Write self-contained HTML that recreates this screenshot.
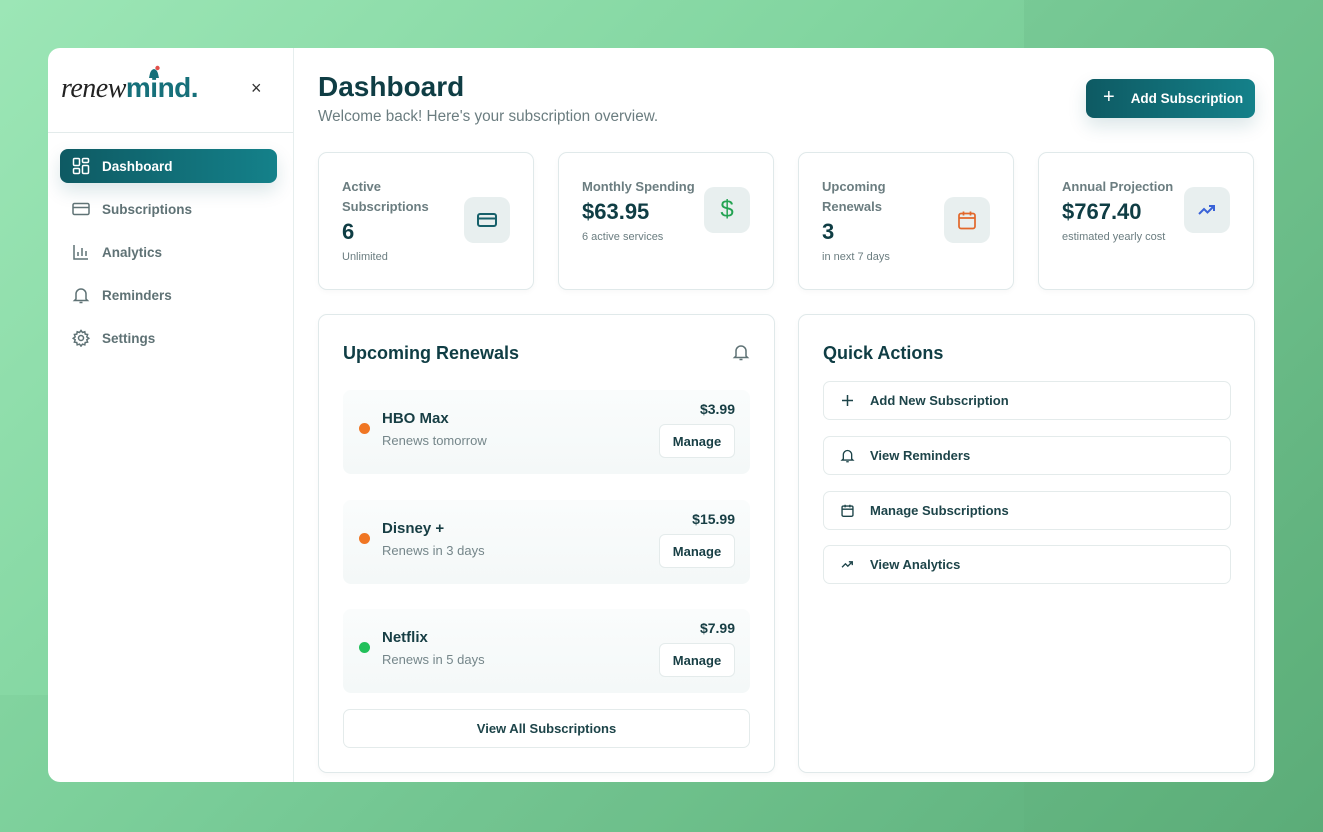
<!DOCTYPE html>
<html><head><meta charset="utf-8"><style>
*{box-sizing:border-box;margin:0;padding:0}
body{width:1323px;height:832px;overflow:hidden;font-family:"Liberation Sans",sans-serif;background:linear-gradient(135deg,#9ce6b6 0%,#82d5a0 40%,#5fb17c 100%);position:relative}
.ov1{position:absolute;left:1024px;top:0;width:299px;height:832px;background:rgba(40,110,70,0.07)}
.ov2{position:absolute;left:0;top:695px;width:1024px;height:137px;background:rgba(40,110,70,0.05)}
.app{position:absolute;left:48px;top:48px;width:1226px;height:734px;background:#fff;border-radius:12px;overflow:hidden}
.side{position:absolute;left:0;top:0;width:246px;height:734px;border-right:1px solid #e6eeee}
.logo{position:absolute;left:0;top:0;width:245px;height:85px;border-bottom:1px solid #e3ebeb}
.nav{position:absolute;left:12px;width:217px;height:34px;border-radius:8px;display:flex;align-items:center;padding-left:12px;font-size:13.5px;color:#5f7275;font-weight:bold}
.nav svg{margin-right:12px}
.nav.act{background:linear-gradient(90deg,#0e5a63,#14818a);color:#fff;box-shadow:0 8px 18px rgba(14,90,99,0.15)}
.abs{position:absolute}
.card{position:absolute;border:1px solid #e0e9ea;border-radius:9px;background:#fff;box-shadow:0 2px 6px rgba(0,0,0,0.03)}
.stat{top:104px;height:138px;width:216px;padding:24px 23px 0}
.row{display:flex;align-items:center}
.stat .t{font-size:13px;color:#6b7d80;font-weight:bold;line-height:20px}
.stat .v{font-size:22px;color:#0f3d44;font-weight:bold;line-height:30px}
.stat .s{font-size:11px;color:#6b7d80;margin-top:4px}
.ib{width:46px;height:46px;border-radius:10px;background:#e8efef;display:flex;align-items:center;justify-content:center;flex-shrink:0}
.h{font-size:18px;color:#0f3d44;font-weight:bold}
.ren{position:absolute;left:24px;width:407px;height:84px;border-radius:8px;background:linear-gradient(180deg,#fafcfc,#f4f8f8)}
.dot{position:absolute;left:16px;top:33px;width:11px;height:11px;border-radius:50%}
.nm{position:absolute;left:39px;top:20px;font-size:15px;color:#173e44;font-weight:bold}
.sb{position:absolute;left:39px;top:43px;font-size:13px;color:#75868a}
.pr{position:absolute;right:15px;top:11px;font-size:14px;color:#173e44;font-weight:bold}
.mg{position:absolute;right:15px;top:34px;width:76px;height:34px;border:1px solid #e4ebeb;border-radius:6px;background:#fff;font-size:13px;color:#173e44;font-weight:bold;display:flex;align-items:center;justify-content:center}
.qa{position:absolute;left:24px;width:408px;height:39px;border:1px solid #e4ebeb;border-radius:7px;display:flex;align-items:center;padding-left:16px;font-size:13px;color:#1d4449;font-weight:bold}
.qa svg{margin-right:15px}
</style></head><body>
<div class="ov1"></div><div class="ov2"></div>
<div class="app">
 <div class="side">
  <div class="logo">
   <div class="abs" style="left:13px;top:24px;font-family:'Liberation Serif',serif;font-style:italic;font-size:28px;color:#222;letter-spacing:-0.5px">renew<span style="font-family:'Liberation Sans',sans-serif;font-style:normal;font-weight:bold;color:#16707a;letter-spacing:-0.5px">mind.</span></div>
   <svg class="abs" style="left:98px;top:17px" width="16" height="16" viewBox="0 0 16 16"><path d="M3 13 C4 9 4 5 8 4 C12 5 12 9 13 13Z" fill="#16707a"/><circle cx="11.5" cy="3" r="2.2" fill="#e2504a"/></svg>
   <div class="abs" style="left:203px;top:30px;font-size:18px;color:#333">×</div>
  </div>
  <div class="nav act" style="top:101px"><svg width="18" height="18" viewBox="0 0 18 18" fill="none" stroke="#fff" stroke-width="1.5"><rect x="1.5" y="1.5" width="6" height="7" rx="1.2"/><rect x="10.5" y="1.5" width="6" height="4" rx="1.2"/><rect x="10.5" y="8.5" width="6" height="8" rx="1.2"/><rect x="1.5" y="11.5" width="6" height="5" rx="1.2"/></svg>Dashboard</div>
  <div class="nav" style="top:144px"><svg width="18" height="18" viewBox="0 0 18 18" fill="none" stroke="#5f7275" stroke-width="1.5"><rect x="1" y="3.5" width="16" height="11" rx="1.5"/><path d="M1 7.5h16"/></svg>Subscriptions</div>
  <div class="nav" style="top:187px"><svg width="18" height="18" viewBox="0 0 18 18" fill="none" stroke="#5f7275" stroke-width="1.5"><path d="M2 2v14h14M6 13V9M10 13V5M14 13V8"/></svg>Analytics</div>
  <div class="nav" style="top:230px"><svg width="18" height="18" viewBox="0 0 18 18" fill="none" stroke="#5f7275" stroke-width="1.5"><path d="M4 13V8a5 5 0 0110 0v5l1.5 1.5h-13z M7.5 16.5h3"/></svg>Reminders</div>
  <div class="nav" style="top:273px"><svg width="18" height="18" viewBox="0 0 18 18" fill="none" stroke="#5f7275" stroke-width="1.5"><circle cx="9" cy="9" r="2.5"/><path d="M9 1.5l1.5 2 2.3-.8.4 2.4 2.4.4-.8 2.3 2 1.5-2 1.5.8 2.3-2.4.4-.4 2.4-2.3-.8-1.5 2-1.5-2-2.3.8-.4-2.4-2.4-.4.8-2.3-2-1.5 2-1.5-.8-2.3 2.4-.4.4-2.4 2.3.8z"/></svg>Settings</div>
 </div>
 <div class="abs" style="left:270px;top:23px;font-size:28px;font-weight:bold;color:#0f3d44">Dashboard</div>
 <div class="abs" style="left:270px;top:60px;font-size:15.3px;color:#6b7d80">Welcome back! Here's your subscription overview.</div>
 <div class="abs" style="left:1038px;top:31px;width:169px;height:39px;border-radius:8px;background:linear-gradient(90deg,#0e5a63,#14818a);color:#fff;font-size:13.5px;font-weight:bold;display:flex;align-items:center;padding-left:17px;box-shadow:0 8px 18px rgba(14,90,99,0.15)"><span style="font-size:20px;font-weight:normal;margin-right:16px;margin-top:-2px">+</span>Add Subscription</div>

 <div class="card stat" style="left:270px"><div class="row"><div style="flex:1"><div class="t">Active<br>Subscriptions</div><div class="v">6</div><div class="s">Unlimited</div></div><div class="ib"><svg width="22" height="22" viewBox="0 0 22 22" fill="none" stroke="#16606a" stroke-width="2"><rect x="2" y="5" width="18" height="12" rx="2"/><path d="M2 9.5h18"/></svg></div></div></div>
 <div class="card stat" style="left:510px"><div class="row"><div style="flex:1"><div class="t">Monthly Spending</div><div class="v">$63.95</div><div class="s">6 active services</div></div><div class="ib" style="font-size:24px;color:#23a352">$</div></div></div>
 <div class="card stat" style="left:750px"><div class="row"><div style="flex:1"><div class="t">Upcoming<br>Renewals</div><div class="v">3</div><div class="s">in next 7 days</div></div><div class="ib"><svg width="22" height="22" viewBox="0 0 22 22" fill="none" stroke="#e2672a" stroke-width="1.7"><rect x="3" y="4.5" width="16" height="15" rx="2"/><path d="M3 9h16M7.5 2.5v4M14.5 2.5v4"/></svg></div></div></div>
 <div class="card stat" style="left:990px"><div class="row"><div style="flex:1"><div class="t">Annual Projection</div><div class="v">$767.40</div><div class="s">estimated yearly cost</div></div><div class="ib"><svg width="22" height="22" viewBox="0 0 22 22" fill="none" stroke="#3a63d8" stroke-width="2"><path d="M3 15l5-5 3.5 3.5L18 7M13 7h5v5"/></svg></div></div></div>

 <div class="card" style="left:270px;top:266px;width:457px;height:459px">
  <div class="abs h" style="left:24px;top:28px">Upcoming Renewals</div>
  <svg class="abs" style="left:413px;top:28px" width="18" height="18" viewBox="0 0 18 18" fill="none" stroke="#5f7275" stroke-width="1.5"><path d="M4 13V8a5 5 0 0110 0v5l1.5 1.5h-13z M7.5 16.5h3"/></svg>
  <div class="ren" style="top:75px"><div class="dot" style="background:#f07623"></div><div class="nm">HBO Max</div><div class="sb">Renews tomorrow</div><div class="pr">$3.99</div><div class="mg">Manage</div></div>
  <div class="ren" style="top:185px"><div class="dot" style="background:#f07623"></div><div class="nm">Disney +</div><div class="sb">Renews in 3 days</div><div class="pr">$15.99</div><div class="mg">Manage</div></div>
  <div class="ren" style="top:294px"><div class="dot" style="background:#22c05a"></div><div class="nm">Netflix</div><div class="sb">Renews in 5 days</div><div class="pr">$7.99</div><div class="mg">Manage</div></div>
  <div class="abs" style="left:24px;top:394px;width:407px;height:39px;border:1px solid #e4ebeb;border-radius:7px;font-size:13px;font-weight:bold;color:#1d4449;display:flex;align-items:center;justify-content:center">View All Subscriptions</div>
 </div>

 <div class="card" style="left:750px;top:266px;width:457px;height:459px">
  <div class="abs h" style="left:24px;top:28px">Quick Actions</div>
  <div class="qa" style="top:66px"><svg width="15" height="15" viewBox="0 0 15 15" stroke="#1d4449" stroke-width="1.5"><path d="M7.5 2v11M2 7.5h11"/></svg>Add New Subscription</div>
  <div class="qa" style="top:121px"><svg width="15" height="15" viewBox="0 0 18 18" fill="none" stroke="#1d4449" stroke-width="1.6"><path d="M4 13V8a5 5 0 0110 0v5l1.5 1.5h-13z M7.5 16.5h3"/></svg>View Reminders</div>
  <div class="qa" style="top:176px"><svg width="15" height="15" viewBox="0 0 22 22" fill="none" stroke="#1d4449" stroke-width="2"><rect x="3" y="4.5" width="16" height="15" rx="2"/><path d="M3 9h16M7.5 2.5v4M14.5 2.5v4"/></svg>Manage Subscriptions</div>
  <div class="qa" style="top:230px"><svg width="15" height="15" viewBox="0 0 22 22" fill="none" stroke="#1d4449" stroke-width="2"><path d="M3 15l5-5 3.5 3.5L18 7M13 7h5v5"/></svg>View Analytics</div>
 </div>
</div>
</body></html>
